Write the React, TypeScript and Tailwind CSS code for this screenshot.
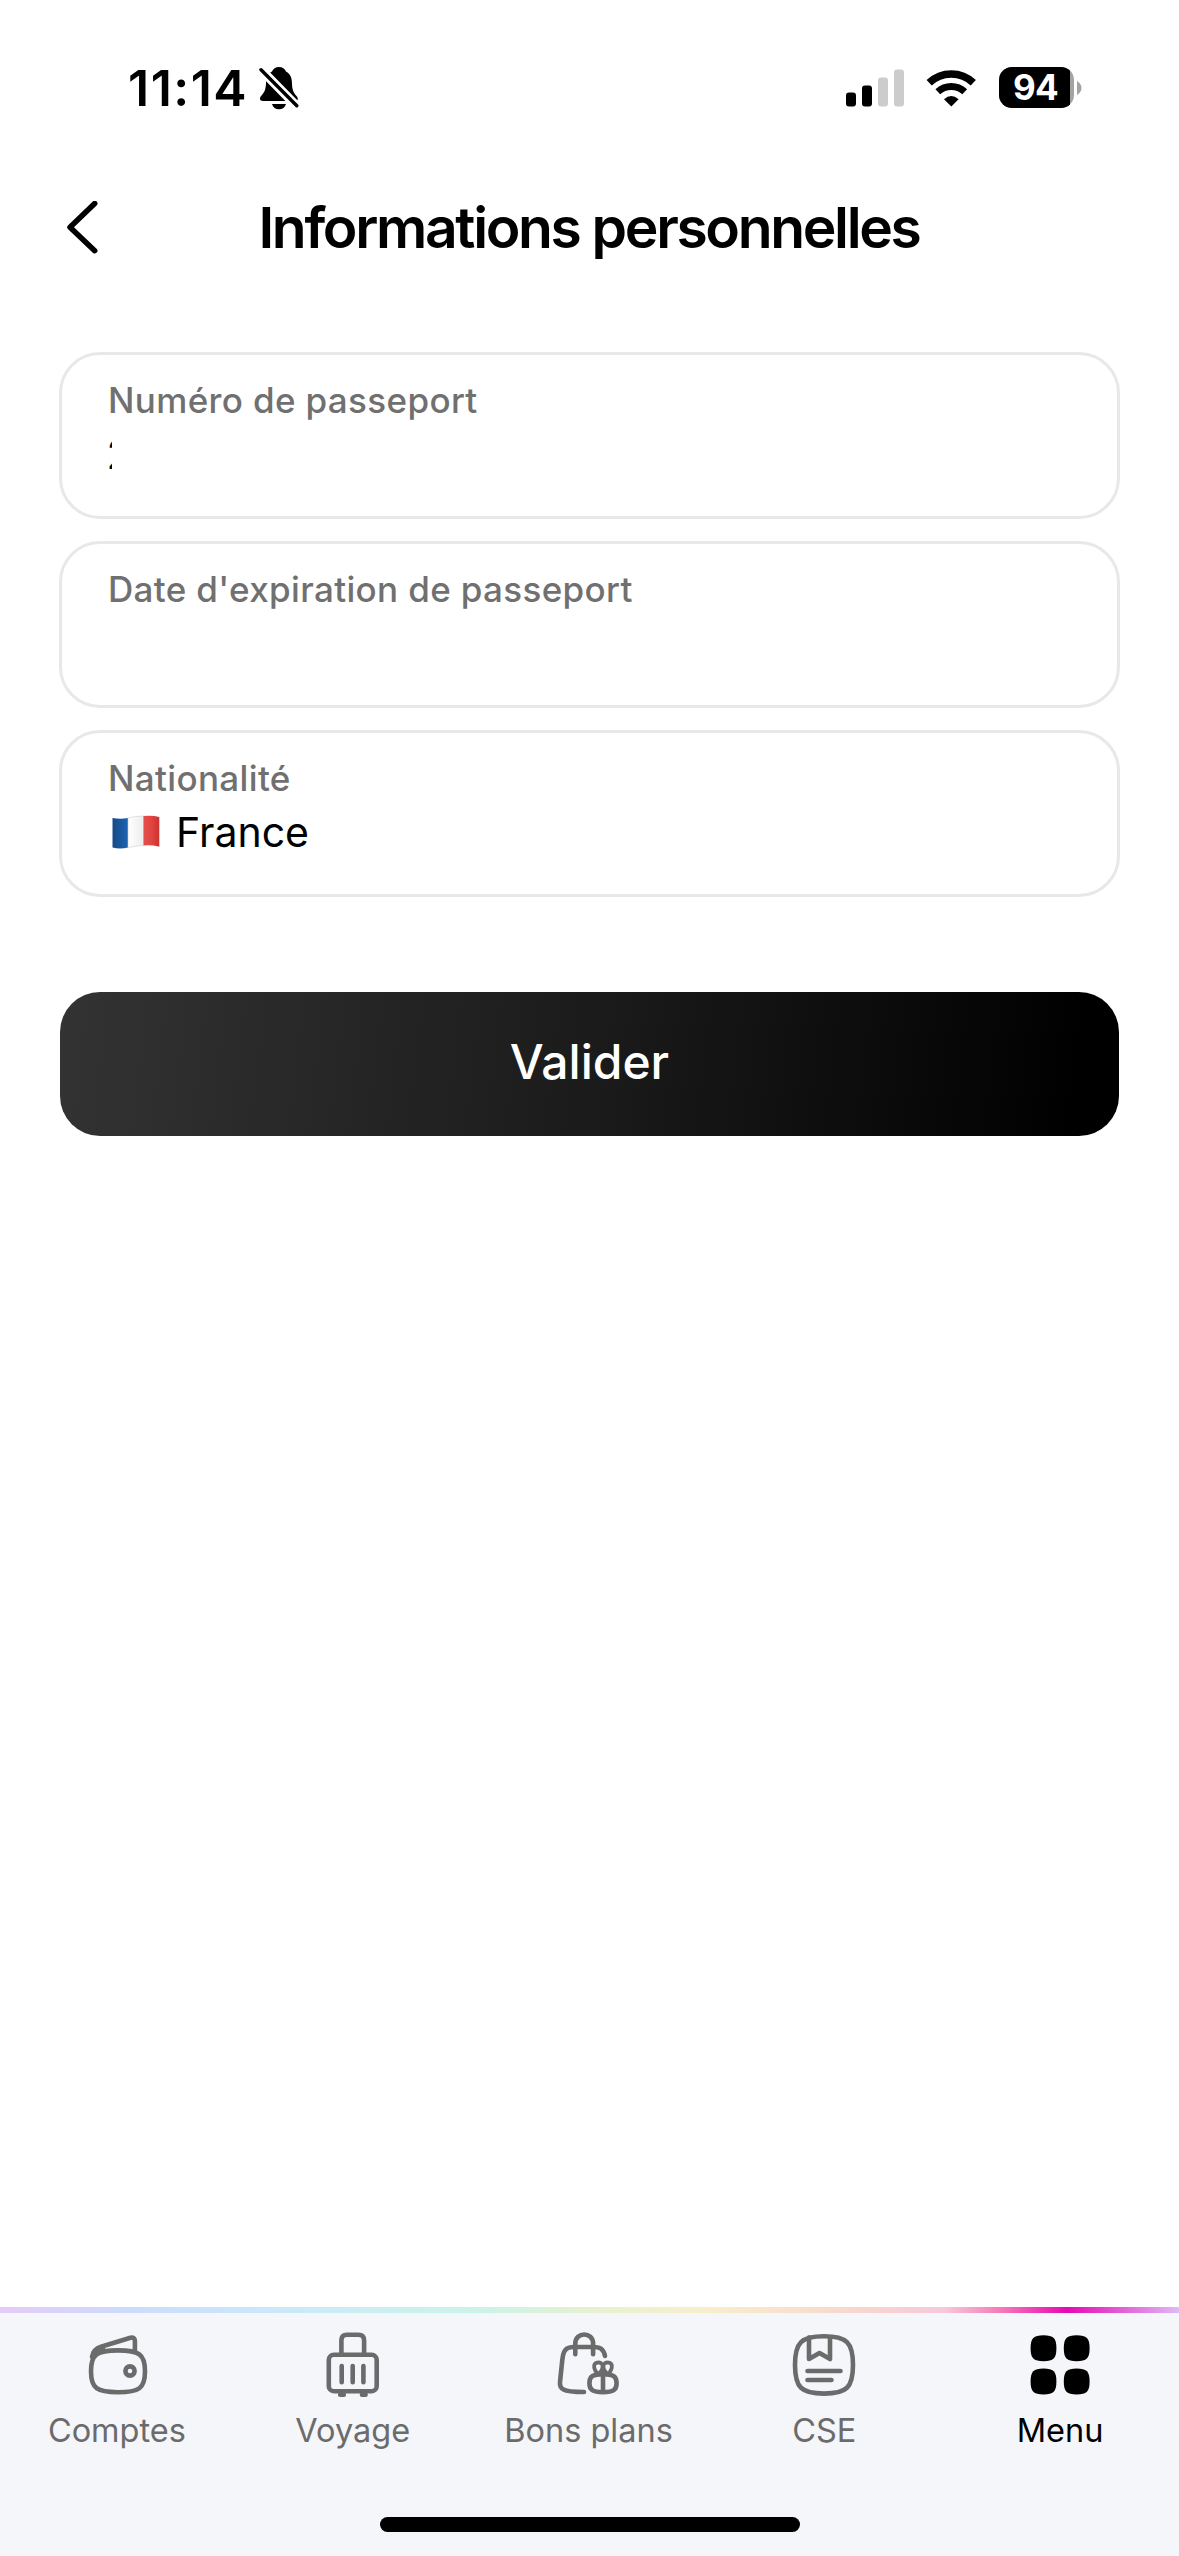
import type { ReactNode } from "react";

const iconProps = {
    viewBox: "0 0 72 72",
    fill: "none",
    stroke: "currentColor",
    strokeWidth: 4.6,
    strokeLinecap: "round" as const,
    strokeLinejoin: "round" as const,
    className: "w-[72px] h-[72px]",
};

const WalletIcon = () => (
    <svg {...iconProps}>
        <path d="M36 22.4C57 22.4 63 26 63 43.3S57 64.2 36 64.2S9 60.5 9 43.3S15 22.4 36 22.4Z" />
        <path d="M10 29C11 23 14 20.2 19 18.7L48.5 9.7C51.2 9 52.9 10.5 52.9 13V22" />
        <path d="M12 24L21 20.5" />
        <circle cx="48" cy="43" r="4.6" strokeWidth="4.6" />
    </svg>
);

const SuitcaseIcon = () => (
    <svg {...iconProps}>
        <rect x="10.8" y="26.8" width="47.9" height="36.4" rx="5" />
        <path d="M23.4 26V12.5Q23.4 6.8 29 6.8H40.4Q46.1 6.8 46.1 12.5V26" />
        <path d="M23.7 38V54.3M34.7 38V54.3M45.4 38V54.3" />
        <path d="M22.2 66.8H25.8M44 66.8H47.6" />
    </svg>
);

const BagIcon = () => (
    <svg {...iconProps}>
        <path d="M31 64C20 64 14 63.5 10.5 61.5C7.5 60 6.7 57.5 7 54L9.3 32C10.3 22.5 12.5 19 21 19H40C47 19 50.3 20.5 52 28" />
        <path d="M22.3 26.2V15.5C22.3 3.4 40.1 3.4 40.1 15.5V26.2" />
        <path d="M50 46.1C60.5 46.1 63.6 48.5 63.6 55.2S60.5 64.1 50 64.1S36.4 61.8 36.4 55.2S39.5 46.1 50 46.1Z" />
        <path d="M50 38V63" />
        <path d="M50 38.5C49.4 34.6 46.7 34.2 44.2 34.6C40.5 35.4 40.6 39 42 42L44 45.5M50 38.5C50.6 34.6 53.3 34.2 55.8 34.6C59.5 35.4 59.4 39 58 42L56 45.5M50 38.5C49.7 42 48 44 46 45.5M50 38.5C50.3 42 52 44 54 45.5" strokeWidth="3.8" />
    </svg>
);

const CseIcon = () => (
    <svg {...iconProps}>
        <path d="M35 8.2C57.5 8.2 64 14.2 64 36.9S57.5 65.6 35 65.6S6 59.6 6 36.9S12.5 8.2 35 8.2Z" />
        <path d="M20 9.5V31L30.5 25L41 31V9.5" />
        <path d="M18.5 43H51.5M18.5 52H42.5" />
    </svg>
);

const MenuIcon = () => (
    <svg {...iconProps} fill="currentColor" stroke="none">
        <path d="M18.5 7.3C28.5 7.3 31.4 10.4 31.4 20.3S28.5 33.3 18.5 33.3S5.6 30.2 5.6 20.3S8.5 7.3 18.5 7.3Z" />
        <path d="M51.7 7.3C61.7 7.3 64.6 10.4 64.6 20.3S61.7 33.3 51.7 33.3S38.8 30.2 38.8 20.3S41.7 7.3 51.7 7.3Z" />
        <path d="M18.5 40.5C28.5 40.5 31.4 43.6 31.4 53.5S28.5 66.5 18.5 66.5S5.6 63.4 5.6 53.5S8.5 40.5 18.5 40.5Z" />
        <path d="M51.7 40.5C61.7 40.5 64.6 43.6 64.6 53.5S61.7 66.5 51.7 66.5S38.8 63.4 38.8 53.5S41.7 40.5 51.7 40.5Z" />
    </svg>
);

const FranceFlag = () => (
    <svg viewBox="0 0 48 34" className="w-12 h-[34px]">
        <defs>
            <linearGradient id="blue" x1="0" x2="1">
                <stop offset="0" stopColor="#174a87" />
                <stop offset="1" stopColor="#1c63b2" />
            </linearGradient>
            <linearGradient id="white" x1="0" x2="1">
                <stop offset="0" stopColor="#fff" />
                <stop offset="1" stopColor="#eceded" />
            </linearGradient>
            <linearGradient id="red" x1="0" x2="1">
                <stop offset="0" stopColor="#e2504c" />
                <stop offset="0.5" stopColor="#e4443f" />
                <stop offset="1" stopColor="#c9332f" />
            </linearGradient>
        </defs>
        <path d="M0.5 3Q8 4.5 16 3V32.5Q8 34.5 0.5 32.5Z" fill="url(#blue)" />
        <path d="M16 3Q24 1 31.5 1V30.5Q24 31 16 32.5Z" fill="url(#white)" stroke="#cfcfcf" strokeWidth="0.6" />
        <path d="M31.5 1Q40 0 47.3 2V31.8Q40 29.8 31.5 30.5Z" fill="url(#red)" />
    </svg>
);

const StatusBar = () => (
    <div className="flex items-center justify-between h-[175px] pl-32 pr-[97px]">
        <div className="flex items-center">
            <span className="w-[131px] text-[50px] leading-[60px] font-semibold tracking-[1.5px]">11:14</span>
            <svg viewBox="0 0 40 44" className="w-10 h-11">
                <path d="M20 1C23.5 1 26 3 27 5.5C31.5 8 33 12 33 18C33.3 25 35 27 37.5 30C40 33 38.5 35 36 35H4C0.5 35 0 32 2.5 29.5C5.5 26 6.5 24 7 18C7 12 8.5 8 13 5.5C14 3 16.5 1 20 1Z" fill="black" />
                <path d="M13 38H27C26 41.5 23.5 43.2 20 43.2S14 41.5 13 38Z" fill="black" />
                <path d="M0 1.5L39 41.5" stroke="white" strokeWidth="9" />
                <path d="M2 3.8L37.8 39.8" stroke="black" strokeWidth="3.4" strokeLinecap="round" />
            </svg>
        </div>
        <div className="flex items-center">
            <svg viewBox="0 0 58 38" className="w-[58px] h-[38px]">
                <rect x="0" y="23.5" width="10" height="14" rx="3" />
                <rect x="16" y="16.5" width="10" height="21" rx="3" />
                <rect x="32" y="8.5" width="10" height="29" rx="3" fill="#ccc" />
                <rect x="48" y="0.5" width="10" height="37" rx="3" fill="#ccc" />
            </svg>
            <svg viewBox="0 0 51 38" className="w-[51px] h-[38px] ml-[22px]">
                <path d="M3.2 13.8A32 32 0 0 1 47.3 13.8" fill="none" stroke="black" strokeWidth="7.5" />
                <path d="M11.8 22.8A19.8 19.8 0 0 1 38.7 22.8" fill="none" stroke="black" strokeWidth="7" />
                <path d="M18 30.3Q25.2 23.5 32.6 30.3L25.3 37.5Z" fill="black" />
            </svg>
            <div className="flex items-center ml-[22px]">
                <div className="flex w-[75px] h-[41px] rounded-[13px] overflow-hidden bg-[#a3a3a3]">
                    <div className="w-[71px] pl-0.5 bg-black text-white text-center text-[35px] leading-[41px] font-bold tracking-[-0.7px]">
                        94
                    </div>
                </div>
                <svg viewBox="0 0 5 14" className="w-[5px] h-[14px] ml-[3px]">
                    <path d="M0 0Q4.5 3 4.5 7T0 14Z" fill="#a3a3a3" />
                </svg>
            </div>
        </div>
    </div>
);

const Field = ({ label, children }: { label: string; children?: ReactNode }) => (
    <div className="h-[167px] rounded-[41px] border-3 border-[#e8e8e8] pl-[46px] pt-[23px]">
        <div className="text-[35px] leading-[44px] font-medium text-[#707070] tracking-[0.35px]">{label}</div>
        <div className="flex items-center h-16 text-[41px] leading-[64px]">{children}</div>
    </div>
);

const tabs = [
    { name: "Comptes", icon: <WalletIcon /> },
    { name: "Voyage", icon: <SuitcaseIcon /> },
    { name: "Bons plans", icon: <BagIcon /> },
    { name: "CSE", icon: <CseIcon /> },
    { name: "Menu", icon: <MenuIcon />, active: true },
];

export default function App() {
    return (
        <div className="flex flex-col w-[1179px] h-[2556px] bg-white text-black font-['Inter',sans-serif] overflow-hidden">
            <StatusBar />

            {/* Header */}
            <header className="flex items-center h-[106px] px-[66px]">
                <svg viewBox="0 0 34 54" className="w-[34px] h-[54px]" fill="none" stroke="black" strokeWidth="5.5" strokeLinecap="round" strokeLinejoin="round">
                    <path d="M28.7 2.5L4 26.2L28.7 49.7" />
                </svg>
                <h1 className="flex-1 pr-[35px] text-center text-[57px] leading-[70px] font-semibold tracking-[-2.35px] whitespace-nowrap">
                    Informations personnelles
                </h1>
            </header>

            {/* Form */}
            <main className="flex flex-col flex-1 gap-[22px] px-[59px] pt-[71px]">
                <Field label="Numéro de passeport">
                    {/* only the edge of the number stays visible */}
                    <span className="w-1 overflow-hidden indent-[-1.5px] whitespace-nowrap">2</span>
                </Field>
                <Field label="Date d'expiration de passeport" />
                <Field label="Nationalité">
                    <div className="flex items-center gap-4 pl-1">
                        <FranceFlag />
                        <span>France</span>
                    </div>
                </Field>
                <button className="h-36 mx-px mt-[73px] pb-1 rounded-[40px] bg-[linear-gradient(97deg,#333_0%,#1b1b1b_50%,#000_96%)] text-white text-[48px] font-medium">
                    Valider
                </button>
            </main>

            {/* Bottom navigation */}
            <div className="h-1.5 bg-[linear-gradient(90deg,#e5cbf7_0px,#cbdcfb_130px,#cbe8fa_270px,#caf2ec_440px,#caf3e8_480px,#e6f1d1_590px,#f7efcb_700px,#f8d6cf_860px,#f7c8da_945px,#f57bb8_1000px,#e509b5_1067px,#dfb9f8_1179px)]" />
            <nav className="flex flex-col items-center justify-between h-[243px] bg-[#f4f6fa]">
                <div className="grid grid-cols-5 w-full pt-[15px]">
                    {tabs.map((tab) => (
                        <div
                            key={tab.name}
                            className={`flex flex-col items-center ${tab.active ? "text-black" : "text-[#6b6b6b]"}`}
                        >
                            {tab.icon}
                            <span className="mt-[11px] pr-0.5 text-[32.5px] leading-10 whitespace-nowrap">{tab.name}</span>
                        </div>
                    ))}
                </div>
                <div className="w-[420px] h-[15px] mb-6 rounded-full bg-black" />
            </nav>
        </div>
    );
}
